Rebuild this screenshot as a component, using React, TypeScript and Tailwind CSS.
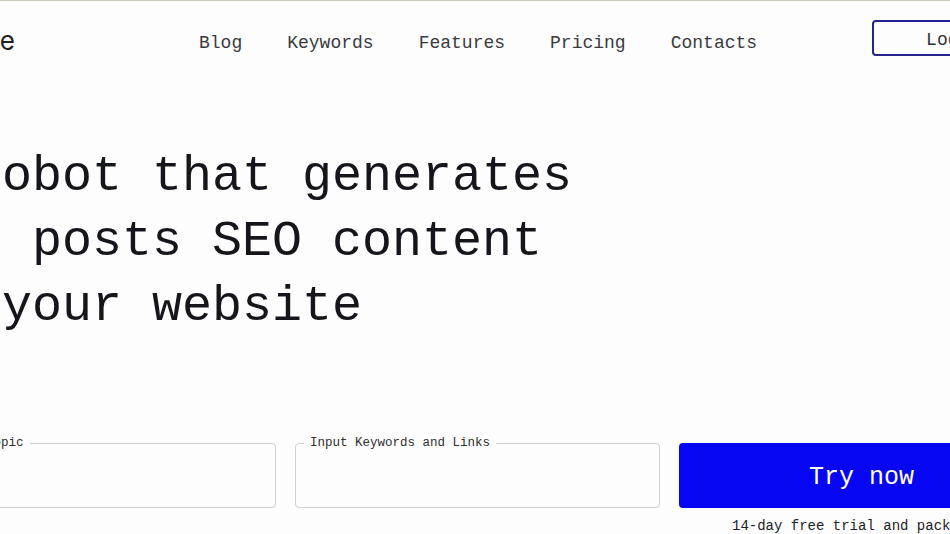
const mono = "font-['Liberation_Mono','DejaVu_Sans_Mono',monospace]";

const navItems = ['Blog', 'Keywords', 'Features', 'Pricing', 'Contacts'];

function Field({ label }: { label: string }) {
  return (
    <div className="relative h-[65px] rounded-[4px] border border-[#d2d2d2] bg-[#fdfdfd]">
      <span
        className={`absolute -top-[9px] left-[8px] whitespace-nowrap bg-[#fdfdfd] px-[6px] text-[12.5px] leading-[16px] text-[#2e2e2e] ${mono}`}
      >
        {label}
      </span>
    </div>
  );
}

export default function App() {
  return (
    <div className="h-[534px] w-[950px] overflow-hidden border-t border-[#cdc8bf] bg-[#fdfdfd]">
      <header className="flex h-[76px] items-start whitespace-nowrap">
        <div className="-ml-[185px] mt-[24px] w-[200px] shrink-0 text-right font-['Inter',sans-serif] text-[26px] leading-[32px] text-[#1f1f24]">
          Postmate
        </div>
        <nav className={`ml-[184px] mt-[30px] flex shrink-0 gap-[45px] text-[18px] leading-[24px] text-[#3a3a3e] ${mono}`}>
          {navItems.map((item) => (
            <a key={item} href="#">
              {item}
            </a>
          ))}
        </nav>
        <button
          className={`ml-[115px] mt-[19px] flex h-[36px] w-[162px] shrink-0 items-center rounded-[4px] border-2 border-[#24248c] pl-[52px] pt-[4px] text-[18px] leading-[24px] text-[#333338] ${mono}`}
        >
          Login
        </button>
      </header>

      <main className="-ml-[89px]">
        <h1
          className={`ml-[1px] mt-[67px] whitespace-pre text-[50px] font-normal leading-[65px] text-[#15151c] ${mono}`}
        >
          {'A robot that generates\nand posts SEO content\nto your website'}
        </h1>

        <div className="mt-[104px] grid w-max grid-cols-[365px_365px_365px] gap-x-[19px]">
          <Field label="Input a Topic" />
          <Field label="Input Keywords and Links" />
          <div className="flex flex-col">
            <button
              className={`h-[65px] rounded-[4px] bg-[#0606f2] pt-[4px] text-[25px] leading-[32px] text-white ${mono}`}
            >
              Try now
            </button>
            <p className={`mt-[8px] whitespace-nowrap pl-[53px] text-[14px] leading-[20px] text-[#222226] ${mono}`}>
              14-day free trial and package of 10 articles
            </p>
          </div>
        </div>
      </main>
    </div>
  );
}
